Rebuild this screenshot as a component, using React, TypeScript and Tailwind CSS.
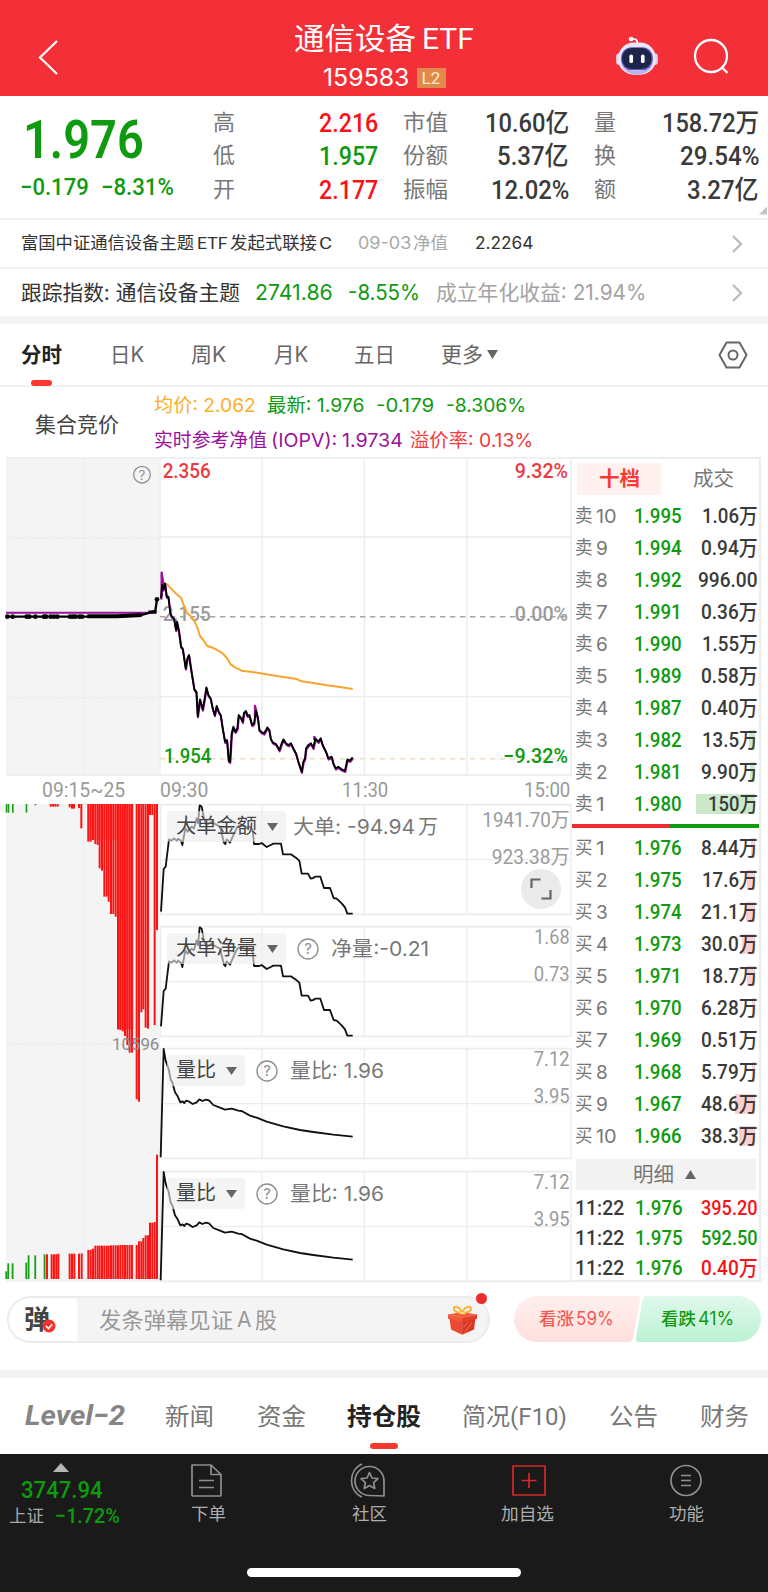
import { useLayoutEffect, useRef, useState, type ReactNode } from "react";

const DIN = "font-['Roboto','Noto_Sans_CJK_SC',sans-serif]";

/** Text squeezed horizontally so that it fills a column of a given width. */
function Fit({ w, className = "", children }: { w: number; className?: string; children: ReactNode }) {
  const ref = useRef<HTMLSpanElement>(null);
  const [scale, setScale] = useState(1);
  useLayoutEffect(() => {
    if (ref.current) setScale(w / ref.current.offsetWidth);
  }, [w]);
  return (
    <span className={`block shrink-0 whitespace-nowrap leading-none ${className}`} style={{ width: w }}>
      <span ref={ref} className="inline-block origin-left" style={{ transform: `scaleX(${scale})` }}>
        {children}
      </span>
    </span>
  );
}

const RED = "text-[#fa1016]";
const GREEN = "text-[#0f9a0f]";
const INK = "text-[#3a3a3a]";

function Robot() {
  return (
    <svg viewBox="0 0 126 118" className="h-[39px] w-[42px]">
      <path d="M64 22 C64 8 56 8 46 9" stroke="#f3e9f7" strokeWidth="6" fill="none" />
      <circle cx="45" cy="9" r="7" fill="#fff" />
      <rect x="0" y="52" width="20" height="36" rx="10" fill="#dcd5f3" />
      <rect x="106" y="52" width="20" height="36" rx="10" fill="#dcd5f3" />
      <rect x="6" y="20" width="114" height="97" rx="47" fill="#e9e6fa" />
      <path d="M14 86 Q30 117 63 117 Q96 117 112 86 Q95 106 63 106 Q31 106 14 86Z" fill="#b9b4e6" />
      <rect x="15" y="34" width="96" height="70" rx="32" fill="#6a55c8" />
      <rect x="18" y="36" width="89" height="64" rx="30" fill="#1c2447" />
      <rect x="40" y="56" width="11" height="26" rx="5" fill="#fff" />
      <rect x="75" y="56" width="11" height="26" rx="5" fill="#fff" />
    </svg>
  );
}

function Header() {
  return (
    <header className="flex h-[96px] shrink-0 bg-[#f33038] text-white">
      <div className="w-[293px] pl-[38px] pt-[39px]">
        <svg viewBox="0 0 20 36" className="h-[36px] w-[20px]" fill="none" stroke="#fff" strokeWidth="2.2">
          <path d="M19 2 L2 18.5 L19 35" />
        </svg>
      </div>
      <div className="flex w-[182px] flex-col items-center">
        <div className={`mt-[23px] flex h-[32px] items-center gap-[6px] text-[30px] ${DIN}`}>
          <Fit w={122}>通信设备</Fit>
          <Fit w={52}>ETF</Fit>
        </div>
        <div className="mt-[10px] flex h-[26px] items-center">
          <Fit w={87} className="text-[24px]">159583</Fit>
          <div className="ml-[7px] flex h-[20px] w-[29px] items-center justify-center bg-[#e08b49] text-[#ffe9d2]">
            <Fit w={19} className={`text-[17px] ${DIN}`}>L2</Fit>
          </div>
        </div>
      </div>
      <div className="flex pl-[141px] pt-[36px]">
        <Robot />
        <svg viewBox="0 0 36 36" className="ml-[35px] mt-[2px] h-[36px] w-[36px]" fill="none" stroke="#fff" strokeWidth="2.3">
          <circle cx="18" cy="18" r="16" />
          <path d="M28.500 29 L34.500 35" />
        </svg>
      </div>
    </header>
  );
}

const quotes: { label: string; lw: number; value: string; vw: number; color: string }[][] = [
  [
    { label: "高", lw: 22, value: "2.216", vw: 59, color: RED },
    { label: "市值", lw: 45, value: "10.60亿", vw: 84, color: INK },
    { label: "量", lw: 22, value: "158.72万", vw: 97, color: INK },
  ],
  [
    { label: "低", lw: 22, value: "1.957", vw: 59, color: GREEN },
    { label: "份额", lw: 45, value: "5.37亿", vw: 72, color: INK },
    { label: "换", lw: 22, value: "29.54%", vw: 79, color: INK },
  ],
  [
    { label: "开", lw: 22, value: "2.177", vw: 59, color: RED },
    { label: "振幅", lw: 45, value: "12.02%", vw: 78, color: INK },
    { label: "额", lw: 22, value: "3.27亿", vw: 72, color: INK },
  ],
];

function Quote() {
  return (
    <section className={`flex h-[122px] shrink-0 ${DIN}`}>
      <div className={`w-[213px] pt-[17px] ${GREEN}`}>
        <Fit w={121} className="ml-[23px] text-[54px] font-semibold">1.976</Fit>
        <div className="mt-[8px] flex pl-[20px] text-[24px] font-medium">
          <Fit w={69}>−0.179</Fit>
          <Fit w={73} className="ml-[12px]">−8.31%</Fit>
        </div>
      </div>
      <div className="pt-[10px]">
        {quotes.map((row, i) => (
          <div key={i} className="flex h-[33.5px] items-center">
            {row.map((c, j) => (
              <div key={c.label} className={`flex items-center justify-between ${["w-[165px]", "ml-[25px] w-[166px]", "ml-[25px] w-[165px]"][j]}`}>
                <Fit w={c.lw} className="text-[22px] text-[#777]">{c.label}</Fit>
                <Fit w={c.vw} className={`text-[26px] font-medium ${c.color}`}>{c.value}</Fit>
              </div>
            ))}
          </div>
        ))}
      </div>
      <svg viewBox="0 0 8 8" className="mb-[3px] h-[9px] w-[8px] self-end" fill="#c4c4c4">
        <path d="M8 0 V8 H0Z" />
      </svg>
    </section>
  );
}

function Chevron() {
  return (
    <svg viewBox="0 0 12 18" className="ml-auto mr-[25px] h-[18px] w-[12px]" fill="none" stroke="#bdbdbd" strokeWidth="2.4">
      <path d="M2 1 L10 9 L2 17" />
    </svg>
  );
}

function FundRows() {
  return (
    <section className="shrink-0">
      <div className="flex h-[49px] items-center border-t-2 border-[#f0f0f0] pl-[21px] text-[17px] text-[#333]">
        <Fit w={173}>富国中证通信设备主题</Fit>
        <Fit w={30} className={`ml-[3px] ${DIN}`}>ETF</Fit>
        <Fit w={87} className="ml-[3px]">发起式联接</Fit>
        <Fit w={13} className={`ml-[2px] ${DIN}`}>C</Fit>
        <Fit w={53} className="ml-[26px] text-[#aaa]">09-03</Fit>
        <Fit w={35} className="ml-[2px] text-[#aaa]">净值</Fit>
        <Fit w={59} className="ml-[27px]">2.2264</Fit>
        <Chevron />
      </div>
      <div className="flex h-[49px] items-center border-t-2 border-[#f0f0f0] pl-[21px] text-[21px] text-[#333]">
        <Fit w={219}>跟踪指数: 通信设备主题</Fit>
        <Fit w={78} className={`ml-[15px] ${GREEN}`}>2741.86</Fit>
        <Fit w={72} className={`ml-[15px] ${GREEN}`}>-8.55%</Fit>
        <Fit w={210} className="ml-[16px] text-[#a3a3a3]">成立年化收益: 21.94%</Fit>
        <Chevron />
      </div>
      <div className="h-[8px] bg-[#f4f4f4]" />
    </section>
  );
}

function PeriodTabs() {
  return (
    <nav className="flex h-[63px] shrink-0 items-center border-b-2 border-[#f0f0f0] pl-[21px] text-[21px] text-[#666]">
      <div className="relative">
        <Fit w={41} className="font-bold text-[#222]">分时</Fit>
        <div className="absolute left-[10px] top-[36px] h-[6px] w-[21px] rounded-[3px] bg-[#f8372f]" />
      </div>
      <Fit w={34} className="ml-[48px]">日K</Fit>
      <Fit w={35} className="ml-[47px]">周K</Fit>
      <Fit w={34} className="ml-[48px]">月K</Fit>
      <Fit w={41} className="ml-[46px]">五日</Fit>
      <Fit w={42} className="ml-[46px]">更多</Fit>
      <svg viewBox="0 0 11 9" className="ml-[4px] h-[9px] w-[11px]" fill="#666">
        <path d="M0 0H11L5.5 9Z" />
      </svg>
      <svg viewBox="0 0 30 28" className="ml-auto mr-[20px] h-[28px] w-[30px]" fill="none" stroke="#666" strokeWidth="2">
        <path d="M8.5 1.5 H21.5 L28.5 14 L21.5 26.5 H8.5 L1.5 14Z" strokeLinejoin="round" />
        <circle cx="15" cy="14" r="4.5" />
      </svg>
    </nav>
  );
}

function Summary() {
  return (
    <section className="flex h-[70px] shrink-0 items-center pl-[35px] text-[19px]">
      <Fit w={84} className="mt-[5px] text-[21px] text-[#444]">集合竞价</Fit>
      <div className="ml-[35px] pt-[1px]">
        <div className="flex h-[35px] items-center">
          <Fit w={102} className="text-[#fbae2c]">均价: 2.062</Fit>
          <Fit w={98} className={`ml-[11px] ${GREEN}`}>最新: 1.976</Fit>
          <Fit w={58} className={`ml-[11px] ${GREEN}`}>-0.179</Fit>
          <Fit w={80} className={`ml-[12px] ${GREEN}`}>-8.306%</Fit>
        </div>
        <div className="flex h-[35px] items-center">
          <Fit w={113} className="text-[#9a129c]">实时参考净值</Fit>
          <Fit w={66} className="ml-[4px] text-[#9a129c]">(IOPV):</Fit>
          <Fit w={61} className="ml-[5px] text-[#9a129c]">1.9734</Fit>
          <Fit w={123} className="ml-[7px] text-[#f03c3c]">溢价率: 0.13%</Fit>
        </div>
      </div>
    </section>
  );
}

function Label({ x, y, w, fill, children, weight = 500, size = 62 }: { x: number; y: number; w: number; fill: string; children: string; weight?: number; size?: number }) {
  return (
    <text x={x} y={y} textLength={w} lengthAdjust="spacingAndGlyphs" fontFamily="Roboto, 'Noto Sans CJK SC', sans-serif" fontSize={size} fontWeight={weight} fill={fill}>
      {children}
    </text>
  );
}

const pricePath =
  "483,445 486,405 490,418 495,400 500,440 505,440 511,490 516,500 522,505 528,540 531,515 537,545 543,590 548,595 557,655 562,625 567,615 572,650 583,718 589,725 593,798 600,748 608,778 614,745 619,712 625,735 632,745 638,775 644,795 650,768 656,785 662,795 668,835 675,875 681,870 686,932 690,935 695,850 700,830 706,845 712,835 716,795 722,802 728,815 732,788 738,783 742,797 748,795 756,825 762,820 768,782 773,800 778,840 786,847 792,850 798,840 802,832 808,840 812,865 818,877 828,882 838,900 845,880 850,868 858,880 865,885 873,880 880,895 888,910 895,935 905,965 910,935 915,925 918,895 925,885 933,880 940,893 946,865 955,875 962,865 968,885 978,905 985,925 995,920 1000,940 1007,955 1015,950 1025,958 1035,962 1042,928 1050,932 1058,922";
const avgPath =
  "488,402 500,402 510,412 525,428 543,443 552,468 562,490 572,498 583,512 593,535 600,558 610,570 622,588 640,594 655,602 670,612 682,626 692,643 705,652 725,662 750,665 790,671 830,678 890,687 905,694 940,699 980,706 1020,711 1058,717";

const auctionDots = [22, 38, 80, 88, 106, 132, 138, 152, 162, 172, 210, 218, 226, 238, 246];

function PriceChart() {
  return (
    <svg viewBox="0 21 1716 957" className="block h-[319px] w-[572px]">
      <rect x="18" y="24" width="461" height="950" fill="#f4f4f4" />
      <g stroke="#ececec" strokeWidth="4" fill="none">
        <path d="M18 24H1716 M18 975H1716" strokeWidth="5" />
        <path d="M480 24V975 M786 24V975 M1093 24V975 M1401 24V975 M480 261H1713 M480 740H1713" />
        <path d="M1713 24V975" strokeWidth="5" />
        <path d="M252 24V975 M18 264H480 M18 743H480" strokeDasharray="4 6" stroke="#e6e6e6" />
      </g>
      <path d="M480 500H1710" stroke="#a6a6a6" strokeWidth="4.5" strokeDasharray="16 14" />
      <path d="M480 926H1710" stroke="#ecdcc0" strokeWidth="4.5" strokeDasharray="16 14" />
      <Label x={488} y={83} w={144} fill="#ee3a3f">2.356</Label>
      <Label x={1544} y={83} w={160} fill="#ee3a3f">9.32%</Label>
      <Label x={488} y={512} w={144} fill="#9b9b9b">2.155</Label>
      <Label x={1544} y={512} w={160} fill="#9b9b9b">0.00%</Label>
      <Label x={492} y={940} w={142} fill="#0f9a0f">1.954</Label>
      <Label x={1510} y={940} w={194} fill="#0f9a0f">−9.32%</Label>
      <path d="M18 488H468" stroke="#9a129c" strokeWidth="6" />
      <path d="M18 500H350 L420 496 L450 488 L466 482 L471 448" stroke="#000" strokeWidth="7" fill="none" />
      <path d="M262 499H350 L425 495" stroke="#000" strokeWidth="12" fill="none" />
      <path d="M445 486H470" stroke="#000" strokeWidth="9" fill="none" />
      {auctionDots.map((x) => (
        <circle key={x} cx={x} cy="500" r="7" />
      ))}
      <circle cx="471" cy="448" r="7" />
      <g fill="none" strokeLinejoin="round">
        <polyline points={avgPath} stroke="#f8a52f" strokeWidth="6" />
        <polyline points={pricePath} stroke="#9a129c" strokeWidth="6" transform="translate(1 4)" />
        <path d="M485 440V368 L491 410 M765 800V768 L770 790 M943 870V858" stroke="#9a129c" strokeWidth="7" />
        <polyline points={pricePath} stroke="#000" strokeWidth="5.5" />
      </g>
      <circle cx="426" cy="74" r="25" fill="none" stroke="#8f8f8f" strokeWidth="4" />
      <text x="426" y="89" textAnchor="middle" fontFamily="Inter, sans-serif" fontSize="40" fill="#8f8f8f">?</text>
    </svg>
  );
}

const topBars: [number, number][] = [
  [152, 20], [159, 20], [166, 20], [173, 20], [209, 22], [216, 26], [222, 26], [237, 24], [244, 85],
  [265, 125], [272, 125], [279, 120], [286, 132], [293, 135], [299, 205], [306, 212], [313, 290], [320, 290],
  [326, 305], [333, 342], [340, 342], [347, 350], [354, 688], [361, 690], [368, 694], [375, 708], [382, 735],
  [389, 758], [396, 758], [410, 898], [417, 905], [424, 637], [430, 628], [437, 683], [444, 686], [450, 45],
  [457, 45], [464, 675], [471, 390],
];
const bottomBars: [number, number][] = [
  [141, 643], [155, 643], [162, 643], [169, 643], [175, 641], [209, 641], [216, 641], [223, 641], [237, 641], [245, 640],
  [265, 630], [272, 629], [279, 626], [286, 617], [293, 617], [299, 617], [306, 617], [313, 617], [320, 617], [326, 617],
  [333, 616], [340, 616], [347, 616], [354, 616], [361, 615], [368, 615], [375, 615], [382, 615], [389, 615], [396, 615],
  [410, 615], [417, 604], [424, 604], [430, 594], [437, 586], [444, 586], [450, 548], [457, 548], [464, 546], [471, 344],
];
const bottomGreen: [number, number][] = [[19, 694], [25, 670], [38, 670], [79, 668], [86, 646], [106, 646], [134, 643]];

function AuctionVolume() {
  return (
    <svg viewBox="0 12 480 1434" className="block h-[478px] w-[160px]">
      <rect x="18" y="12" width="462" height="1434" fill="#f4f4f4" />
      <path d="M252 12V1446 M18 733H480" stroke="#e6e6e6" strokeWidth="4" strokeDasharray="4 6" />
      <g fill="#fb1414">
        {topBars.map(([x, y]) => <rect key={x} x={x - 3} y="12" width="6" height={y - 12} />)}
        {bottomBars.map(([x, y]) => <rect key={x} x={x - 3} y={y + 720} width="6" height={717 - y} />)}
        <rect x="354" y="12" width="46" height="676" opacity=".6" />
        <rect x="262" y="12" width="94" height="108" opacity=".35" />
      </g>
      <g fill="#18a018">
        {[[17, 38], [23, 38], [36, 38], [77, 38], [104, 16]].map(([x, y]) => <rect key={x} x={x} y="12" width="5" height={y - 12} />)}
        {bottomGreen.map(([x, y]) => <rect key={x} x={x - 3} y={y + 720} width="5.5" height={717 - y} />)}
      </g>
      <Label x={336} y={750} w={142} fill="#8c8c8c" weight={400} size={51}>10596</Label>
    </svg>
  );
}

const bigOrder =
  "491,195 497,188 507,106 515,110 522,103 530,110 535,104 543,110 547,123 556,73 563,83 575,68 582,73 590,43 594,58 599,4 605,8 612,43 620,63 635,53 650,63 660,68 672,116 676,120 680,106 690,116 700,93 712,68 725,63 740,73 750,68 758,78 762,120 778,120 785,117 800,129 812,123 820,119 843,119 849,151 873,151 880,156 890,163 898,170 905,209 924,209 932,224 940,222 945,218 961,218 972,252 990,252 1001,282 1010,284 1025,298 1035,310 1042,329 1058,329";
const volumeRatio =
  "482,328 491,3 497,38 506,63 512,95 517,103 525,133 532,143 541,163 548,160 553,165 558,158 568,161 578,168 590,163 598,154 607,159 618,155 627,157 640,171 660,179 675,185 695,182 715,188 725,189 750,203 770,209 800,221 850,235 900,246 940,252 1000,260 1058,266";

function Help() {
  return (
    <svg viewBox="0 0 22 22" className="h-[22px] w-[22px]" fill="none">
      <circle cx="11" cy="11" r="10" stroke="#8f8f8f" strokeWidth="1.4" />
      <text x="11" y="16.3" textAnchor="middle" fontFamily="Inter, sans-serif" fontSize="15" fill="#8f8f8f">?</text>
    </svg>
  );
}

function Panel({ line, name, nameW, help, children, high, highW, low, lowW, gap, labelY = 55 }: {
  line: string; name: string; nameW: number; help?: boolean; children: ReactNode;
  high: string; highW: number; low: string; lowW: number; gap: string; labelY?: number;
}) {
  return (
    <div className={`relative h-[111px] ${gap}`}>
      <svg viewBox="480 0 1236 333" className="block h-[111px] w-[412px] overflow-visible">
        <path d="M480 2H1713 M480 331H1713" stroke="#ececec" strokeWidth="5" />
        <path d="M480 167H1713 M482 0V333 M786 0V333 M1093 0V333 M1401 0V333 M1713 0V333" stroke="#ececec" strokeWidth="4" />
        <Label x={1709 - highW} y={labelY} w={highW} fill="#9b9b9b" weight={400}>{high}</Label>
        <Label x={1709 - lowW} y={labelY + 110} w={lowW} fill="#9b9b9b" weight={400}>{low}</Label>
        <polyline points={line} fill="none" stroke="#111" strokeWidth="5.5" strokeLinejoin="round" />
      </svg>
      <div className="absolute left-[7px] top-[7px] flex h-[31px] items-center">
        <div className="flex h-[31px] items-center rounded-[4px] bg-[#ededed]/60 pl-[9px] pr-[8px] text-[20.5px] text-[#444]">
          <Fit w={nameW}>{name}</Fit>
          <svg viewBox="0 0 11 8" className="ml-[10px] h-[8px] w-[11px]" fill="#666">
            <path d="M0 0H11L5.5 8Z" />
          </svg>
        </div>
        {help && <div className="ml-[11px]"><Help /></div>}
        <div className="ml-[12px] text-[20px] text-[#777]">{children}</div>
      </div>
    </div>
  );
}

function Panels() {
  return (
    <div className="relative w-[412px]">
      <Panel line={"483,323 " + bigOrder} name="大单金额" nameW={81} high="1941.70万" highW={262} low="923.38万" lowW={234} gap="" labelY={70}>
        <div className="-ml-[5px] flex items-center"><Fit w={122}>大单: -94.94</Fit><Fit w={20} className="ml-[3px]">万</Fit></div>
      </Panel>
      <Panel line={"483,301 " + bigOrder} name="大单净量" nameW={81} help high="1.68" highW={106} low="0.73" lowW={108} gap="mt-[11px]">
        <Fit w={98}>净量:-0.21</Fit>
      </Panel>
      <Panel line={volumeRatio} name="量比" nameW={40} help high="7.12" highW={108} low="3.95" lowW={108} gap="mt-[11px]">
        <Fit w={94}>量比: 1.96</Fit>
      </Panel>
      <Panel line={volumeRatio} name="量比" nameW={40} help high="7.12" highW={108} low="3.95" lowW={108} gap="mt-[12px]">
        <Fit w={94}>量比: 1.96</Fit>
      </Panel>
      <div className="absolute left-[361px] top-[65px] flex h-[40px] w-[40px] items-center justify-center rounded-full bg-[#eaeaea]">
        <svg viewBox="0 0 22 22" className="h-[22px] w-[22px]" fill="none" stroke="#666" strokeWidth="2.2">
          <path d="M1.5 10V1.5H10.5 M20.5 12V20.5H11.5" />
        </svg>
      </div>
    </div>
  );
}

const sells: [string, string, number, number][] = [
  ["10", "1.995", 55, 0], ["9", "1.994", 56, 0], ["8", "1.992", 59, 0], ["7", "1.991", 56, 0], ["6", "1.990", 55, 0],
  ["5", "1.989", 56, 0], ["4", "1.987", 56, 0], ["3", "1.982", 55, 6], ["2", "1.981", 56, 5], ["1", "1.980", 49, 59],
];
const sellVol = ["1.06万", "0.94万", "996.00", "0.36万", "1.55万", "0.58万", "0.40万", "13.5万", "9.90万", "150万"];
const buys: [string, string, number, number][] = [
  ["1", "1.976", 56, 4], ["2", "1.975", 55, 8], ["3", "1.974", 56, 9], ["4", "1.973", 56, 13], ["5", "1.971", 55, 8],
  ["6", "1.970", 56, 3], ["7", "1.969", 56, 0], ["8", "1.968", 56, 3], ["9", "1.967", 56, 20], ["10", "1.966", 56, 16],
];
const buyVol = ["8.44万", "17.6万", "21.1万", "30.0万", "18.7万", "6.28万", "0.51万", "5.79万", "48.6万", "38.3万"];

function BookRow({ side, row, vol }: { side: string; row: [string, string, number, number]; vol: string }) {
  const [n, price, vw, bar] = row;
  return (
    <div className={`relative flex h-[32px] items-center text-[21px] ${DIN}`}>
      <div
        className={`absolute right-[4px] top-[6px] h-[20px] ${side === "卖" ? "bg-[#c9e9c9]" : "bg-[#fcd0d0]"}`}
        style={{ width: bar }}
      />
      <Fit w={18} className="ml-[3px] text-[18.5px] text-[#777]">{side}</Fit>
      <Fit w={n.length > 1 ? 21 : n === "1" ? 9 : 12} className="ml-[3px] font-['Inter'] text-[19px] text-[#777]">{n}</Fit>
      <div className="ml-auto flex w-[125px] items-center justify-between pr-[1px] font-medium">
        <Fit w={48} className={GREEN}>{price}</Fit>
        <Fit w={vw + 1} className={`relative ${INK}`}>{vol}</Fit>
      </div>
    </div>
  );
}

const trades = [
  { v: "395.20", c: RED, p: "1.976" },
  { v: "592.50", c: GREEN, p: "1.975" },
  { v: "0.40万", c: RED, p: "1.976" },
];

function OrderBook() {
  return (
    <aside className="h-[825px] w-[189px] overflow-hidden border-b-2 border-r-2 border-t-2 border-[#ececec]">
      <div className="mb-[5px] mt-[4px] flex h-[32px] items-center pl-[5px] text-[20px]">
        <div className="flex h-[32px] w-[84px] items-center justify-center bg-[#fff1f0]">
          <Fit w={41} className="font-bold text-[#f93b34]">十档</Fit>
        </div>
        <Fit w={41} className="ml-[32px] text-[#777]">成交</Fit>
      </div>
      {sells.map((r, i) => <BookRow key={r[0]} side="卖" row={r} vol={sellVol[i]} />)}
      <div className="my-[4px] flex h-[4px]">
        <div className="w-[98px] bg-[#ee2c30]" />
        <div className="flex-1 bg-[#0f9a0f]" />
      </div>
      {buys.map((r, i) => <BookRow key={r[0]} side="买" row={r} vol={buyVol[i]} />)}
      <div className="ml-[4px] mr-[3px] mt-[7px] flex h-[31px] items-center justify-center bg-[#f3f3f3] text-[20px] text-[#777]">
        <Fit w={41} className="-ml-[3px]">明细</Fit>
        <svg viewBox="0 0 11 9" className="ml-[11px] h-[9px] w-[11px]" fill="#666">
          <path d="M0 9H11L5.5 0Z" />
        </svg>
      </div>
      <div className={`mt-[3px] text-[21px] font-medium ${DIN}`}>
        {trades.map((t, i) => (
          <div key={i} className="flex h-[30px] items-center pl-[3px] pr-[1px]">
            <Fit w={49} className={INK}>11:22</Fit>
            <Fit w={48} className={`ml-[11px] ${GREEN}`}>{t.p}</Fit>
            <Fit w={57} className={`ml-auto ${t.c}`}>{t.v}</Fit>
          </div>
        ))}
      </div>
    </aside>
  );
}

function Market() {
  return (
    <section className="flex h-[825px] shrink-0">
      <div className="w-[572px]">
        <PriceChart />
        <div className={`flex h-[28px] items-center pl-[42px] text-[21px] text-[#999] ${DIN}`}>
          <Fit w={83}>09:15~25</Fit>
          <Fit w={48} className="ml-[35px]">09:30</Fit>
          <Fit w={46} className="ml-[134px]">11:30</Fit>
          <Fit w={46} className="ml-[136px]">15:00</Fit>
        </div>
        <div className="flex h-[478px]">
          <AuctionVolume />
          <Panels />
        </div>
      </div>
      <OrderBook />
    </section>
  );
}

function Gift() {
  return (
    <svg viewBox="0 0 86 88" className="h-[30px] w-[29px]">
      <path d="M4 36 L42 46 V88 L9 72Z" fill="#ea4a30" />
      <path d="M82 36 L42 46 V88 L77 72Z" fill="#d93324" />
      <path d="M0 28 L42 20 L86 28 V40 L42 50 L0 40Z" fill="#f0573b" />
      <path d="M42 34 L86 28 V40 L42 50Z" fill="#e3402b" />
      <path d="M0 28 L42 36 L86 28" stroke="#f98b62" strokeWidth="2" fill="none" />
      <path d="M72 50 L50 80 M60 50 L46 66" stroke="#f06a45" strokeWidth="3" />
      <path d="M42 22 C30 -4 10 4 20 16 C26 23 36 22 42 22 C54 -4 76 4 66 16 C60 23 48 22 42 22Z" fill="none" stroke="#f3b53b" strokeWidth="6" />
      <path d="M36 20 H49 L51 27 H34Z" fill="#ffd873" />
    </svg>
  );
}

function Danmaku() {
  return (
    <section className="flex h-[88px] shrink-0 pl-[7px] pt-[14px]">
      <div className="relative flex h-[47px] w-[483px] items-center overflow-visible rounded-full border-2 border-[#ebebeb] bg-[#f4f4f4]">
        <div className="flex h-full w-[68px] items-center rounded-l-full bg-white pl-[15px]">
          <Fit w={26} className="text-[26px] font-bold text-[#444]">弹</Fit>
        </div>
        <svg viewBox="0 0 14 14" className="absolute left-[33px] top-[21px] h-[14px] w-[14px]">
          <circle cx="7" cy="7" r="6.5" fill="#f0352f" />
          <path d="M4 7 L6.5 9.5 L10.3 5.2" fill="none" stroke="#fff" strokeWidth="1.6" />
        </svg>
        <div className="ml-[22px] flex items-center text-[22px] text-[#999]">
          <Fit w={134}>发条弹幕见证</Fit>
          <Fit w={15} className="ml-[4px] text-[21px]">A</Fit>
          <Fit w={22} className="ml-[3px]">股</Fit>
        </div>
        <div className="ml-auto mr-[11px]"><Gift /></div>
        <div className="absolute right-[1px] top-[-5px] h-[11px] w-[11px] rounded-full bg-[#ee2c30]" />
      </div>
      <div className="relative ml-[24px] flex h-[46px] w-[247px]">
        <svg viewBox="0 0 247 46" className="absolute inset-0 h-[46px] w-[247px]">
          <defs>
            <linearGradient id="up" x2="0" y2="1"><stop stopColor="#ffefee" /><stop offset="1" stopColor="#fee0dd" /></linearGradient>
            <linearGradient id="down" x2="0" y2="1"><stop stopColor="#e0f9ec" /><stop offset="1" stopColor="#bdf1d3" /></linearGradient>
          </defs>
          <path d="M23 0 H123 Q127 0 126 4 L119 42 Q118 46 114 46 H23 A23 23 0 0 1 23 0Z" fill="url(#up)" />
          <path d="M133 0 H224 A23 23 0 0 1 224 46 H125 Q121 46 122 42 L128.500 4 Q129 0 133 0Z" fill="url(#down)" />
        </svg>
        <div className="relative flex items-center pl-[25px] text-[17px]">
          <Fit w={35} className="font-medium text-[#f55a52]">看涨</Fit>
          <Fit w={38} className="ml-[2px] text-[18px] text-[#f55a52]">59%</Fit>
          <Fit w={35} className={`ml-[47px] font-medium ${GREEN}`}>看跌</Fit>
          <Fit w={36} className={`ml-[2px] text-[18px] ${GREEN}`}>41%</Fit>
        </div>
      </div>
    </section>
  );
}

function SectionTabs() {
  return (
    <nav className="flex h-[84px] shrink-0 items-center border-t-8 border-[#f4f4f4] pl-[25px] text-[24px] text-[#777]">
      <Fit w={100} className={`text-[28px] font-bold italic text-[#858585] ${DIN}`}>Level−2</Fit>
      <Fit w={49} className="ml-[40px] mt-[2px]">新闻</Fit>
      <Fit w={49} className="ml-[43px] mt-[2px]">资金</Fit>
      <div className="relative ml-[41px] mt-[2px]">
        <Fit w={74} className="font-bold text-[#222]">持仓股</Fit>
        <div className="absolute left-[23px] top-[38px] h-[6px] w-[28px] rounded-[3px] bg-[#f8372f]" />
      </div>
      <Fit w={105} className={`ml-[41px] mt-[2px] text-[24px] ${DIN}`}>简况(F10)</Fit>
      <Fit w={49} className="ml-[42px] mt-[2px]">公告</Fit>
      <Fit w={49} className="ml-[42px] mt-[2px]">财务</Fit>
    </nav>
  );
}

function NavItem({ label, w, className, children }: { label: string; w: number; className: string; children: ReactNode }) {
  return (
    <div className={`flex w-[60px] flex-col items-center pt-[8px] ${className}`}>
      <svg viewBox="0 0 36 36" className="h-[36px] w-[36px] overflow-visible" fill="none" stroke="#8f8f8f" strokeWidth="1.7" strokeLinejoin="round">
        {children}
      </svg>
      <Fit w={w} className="mt-[8px] text-[17px] text-[#adadad]">{label}</Fit>
    </div>
  );
}

function BottomBar() {
  return (
    <footer className="flex h-[138px] shrink-0 flex-col justify-between bg-[#1a1a1a]">
      <div className="flex h-[84px]">
        <div className={`w-[130px] pl-[9px] pt-[9px] text-[#0c9c0c] ${DIN}`}>
          <svg viewBox="0 0 16 9" className="ml-[44px] h-[9px] w-[16px]" fill="#b5b5b5">
            <path d="M0 9H16L8 0Z" />
          </svg>
          <Fit w={82} className="ml-[12px] mt-[6px] text-[24px] font-medium">3747.94</Fit>
          <div className="mt-[4px] flex items-center">
            <Fit w={35} className="text-[17px] text-[#a8a8a8]">上证</Fit>
            <Fit w={65} className="ml-[11px] text-[21px] font-medium">−1.72%</Fit>
          </div>
        </div>
        <NavItem label="下单" w={35} className="ml-[48px]">
          <path d="M2 3 H21 L31 12.500 V33 Q31 34 30 34 H3 Q2 34 2 33Z M21 3 V12.500 H31 M9 18.500 H24 M9 25.500 H24" />
        </NavItem>
        <NavItem label="社区" w={35} className="ml-[101px]">
          <path d="M33 34 V19 A14.500 14.500 0 1 0 18.500 33.500 L33 34Z M11 2 C-3 8 -3 29 11 35" />
          <path d="M18.500 10.500 L21 16 L27 16.700 L22.600 20.700 L23.800 26.500 L18.500 23.500 L13.200 26.500 L14.400 20.700 L10 16.700 L16 16Z" />
        </NavItem>
        <NavItem label="加自选" w={53} className="ml-[98px]">
          <path d="M4 4 H36 V33 H4Z M20 11 V26 M12.500 18.500 H27.500" stroke="#d8282c" />
        </NavItem>
        <NavItem label="功能" w={35} className="ml-[99px]">
          <circle cx="18" cy="18.500" r="15" />
          <path d="M13 13.500 H23 M13 18.500 H23 M13 23.500 H23" />
        </NavItem>
      </div>
      <div className="mb-[15px] h-[9px] w-[274px] self-center rounded-full bg-white" />
    </footer>
  );
}

export default function App() {
  return (
    <div className="flex h-[1592px] w-[768px] flex-col overflow-hidden bg-white font-['Inter','Noto_Sans_CJK_SC',sans-serif]">
      <Header />
      <Quote />
      <FundRows />
      <PeriodTabs />
      <Summary />
      <Market />
      <Danmaku />
      <SectionTabs />
      <BottomBar />
    </div>
  );
}
